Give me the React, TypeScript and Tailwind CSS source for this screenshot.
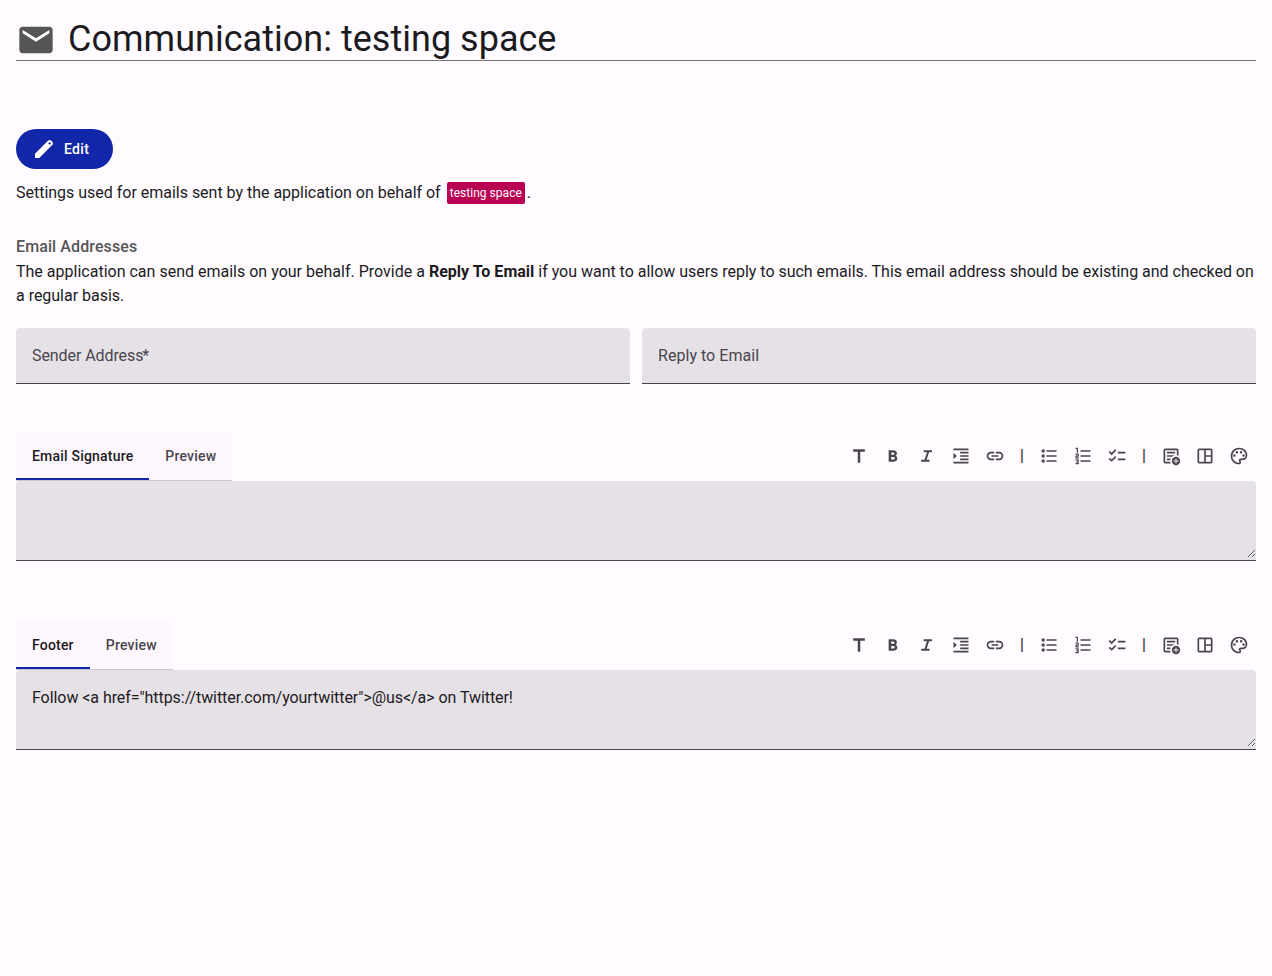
import { clsx } from 'clsx';
import { useState } from 'react';

const icons = {
    mail: 'M800-800H160c-44 0-80 36-80 80v480c0 44 36 80 80 80h640c44 0 80-36 80-80v-480c0-44-36-80-80-80Zm0 160L480-440 160-640v-80l320 200 320-200v80Z',
    edit: 'M120-120v-170l528-527q12-11 26.5-17t30.5-6q16 0 31 6t26 18l55 56q12 11 17.5 26t5.5 30q0 16-5.5 30.5T817-647L290-120H120Zm584-528 56-56-56-56-56 56 56 56Z',
    title: 'M420-160v-520H200v-120h560v120H540v520H420Z',
    bold: 'M272-200v-560h221q65 0 120 40t55 111q0 51-23 78.5T602-491q25 11 55.5 41t30.5 90q0 89-65 124.5T501-200H272Zm121-112h104q48 0 58.5-24.5T566-372q0-11-10.5-35.5T494-432H393v120Zm0-228h93q33 0 48-17t15-38q0-24-17-39t-44-15h-95v109Z',
    italic: 'M200-200v-100h160l120-360H320v-100h400v100H580L460-300h140v100H200Z',
    indent: 'M120-120v-80h720v80H120Zm320-160v-80h400v80H440Zm0-160v-80h400v80H440Zm0-160v-80h400v80H440ZM120-760v-80h720v80H120Zm0 440v-320l160 160-160 160Z',
    link: 'M440-280H280q-83 0-141.5-58.5T80-480q0-83 58.5-141.5T280-680h160v80H280q-50 0-85 35t-35 85q0 50 35 85t85 35h160v80ZM320-440v-80h320v80H320Zm200 160v-80h160q50 0 85-35t35-85q0-50-35-85t-85-35H520v-80h160q83 0 141.5 58.5T880-480q0 83-58.5 141.5T680-280H520Z',
    bullets:
        'M360-200v-80h480v80H360Zm0-240v-80h480v80H360Zm0-240v-80h480v80H360ZM200-160q-33 0-56.5-23.5T120-240q0-33 23.5-56.5T200-320q33 0 56.5 23.5T280-240q0 33-23.5 56.5T200-160Zm0-240q-33 0-56.5-23.5T120-480q0-33 23.5-56.5T200-560q33 0 56.5 23.5T280-480q0 33-23.5 56.5T200-400Zm0-240q-33 0-56.5-23.5T120-720q0-33 23.5-56.5T200-800q33 0 56.5 23.5T280-720q0 33-23.5 56.5T200-640Z',
    numbers:
        'M120-80v-60h100v-30h-60v-60h60v-30H120v-60h120q17 0 28.5 11.5T280-280v40q0 17-11.5 28.5T240-200q17 0 28.5 11.5T280-160v40q0 17-11.5 28.5T240-80H120Zm0-280v-110q0-17 11.5-28.5T160-510h60v-30H120v-60h120q17 0 28.5 11.5T280-560v70q0 17-11.5 28.5T240-450h-60v30h100v60H120Zm60-280v-180h-60v-60h120v240h-60Zm180 440v-80h480v80H360Zm0-240v-80h480v80H360Zm0-240v-80h480v80H360Z',
    checklist:
        'M222-200 80-342l56-56 85 85 170-170 56 57-225 226Zm0-320L80-662l56-56 85 85 170-170 56 57-225 226Zm298 240v-80h360v80H520Zm0-320v-80h360v80H520Z',
    addNotes:
        'M200-120q-33 0-56.5-23.5T120-200v-560q0-33 23.5-56.5T200-840h560q33 0 56.5 23.5T840-760v268q-19-9-39-15.5t-41-9.5v-243H200v560h242q3 22 9.5 42t15.5 38H200Zm80-160h163q3-21 9.5-41t14.5-39H280v80Zm0-160h244q32-30 71.5-50t84.5-27v-3H280v80Zm0-160h400v-80H280v80ZM720-40q-83 0-141.5-58.5T520-240q0-83 58.5-141.5T720-440q83 0 141.5 58.5T920-240q0 83-58.5 141.5T720-40Zm-20-80h40v-100h100v-40H740v-100h-40v100H600v40h100v100Z',
    dashboard:
        'M200-120q-33 0-56.5-23.5T120-200v-560q0-33 23.5-56.5T200-840h560q33 0 56.5 23.5T840-760v560q0 33-23.5 56.5T760-120H200Zm0-80h240v-560H200v560Zm320 0h240v-240H520v240Zm0-320h240v-240H520v240Z',
    palette:
        'M480-80q-82 0-155-31.5t-127.5-86Q143-252 111.5-325T80-480q0-83 32.5-156t88-127Q256-817 330-848.5T488-880q80 0 151 27.5t124.5 76q53.5 48.5 85 115T880-518q0 115-70 176.5T640-280h-74q-9 0-12.5 5t-3.5 11q0 12 15 34.5t15 51.5q0 50-27.5 74T480-80Zm-220-360q26 0 43-17t17-43q0-26-17-43t-43-17q-26 0-43 17t-17 43q0 26 17 43t43 17Zm120-160q26 0 43-17t17-43q0-26-17-43t-43-17q-26 0-43 17t-17 43q0 26 17 43t43 17Zm200 0q26 0 43-17t17-43q0-26-17-43t-43-17q-26 0-43 17t-17 43q0 26 17 43t43 17Zm120 160q26 0 43-17t17-43q0-26-17-43t-43-17q-26 0-43 17t-17 43q0 26 17 43t43 17ZM480-160q9 0 14.5-5t5.5-13q0-14-15-33t-15-57q0-42 29-67t71-25h70q66 0 114-38.5T800-518q0-121-92.5-201.5T488-800q-136 0-232 93t-96 227q0 133 93.5 226.5T480-160Z',
};

type IconName = keyof typeof icons;

function Icon({ name, className }: { name: IconName; className?: string }) {
    return (
        <svg viewBox="0 -960 960 960" fill="currentColor" className={clsx('shrink-0', className)}>
            <path d={icons[name]} />
        </svg>
    );
}

const toolGroups: IconName[][] = [
    ['title', 'bold', 'italic', 'indent', 'link'],
    ['bullets', 'numbers', 'checklist'],
    ['addNotes', 'dashboard', 'palette'],
];

function Toolbar() {
    return (
        <div className="flex h-12 items-center text-[#49454e]">
            {toolGroups.map((group, index) => (
                <div key={group[0]} className="flex items-center">
                    {index > 0 && <span className="w-5 text-center text-base leading-5 text-[#1d1b1e]">|</span>}
                    {group.map((name) => (
                        <button key={name} type="button" aria-label={name} className="flex h-[34px] w-[34px] items-center justify-center">
                            <Icon name={name} className="h-5 w-5" />
                        </button>
                    ))}
                </div>
            ))}
        </div>
    );
}

interface MarkdownEditorProps {
    label: string;
    value?: string;
}

function MarkdownEditor({ label, value = '' }: MarkdownEditorProps) {
    const [tab, setTab] = useState(label);

    return (
        <div>
            <div className="flex h-[49px] items-start justify-between">
                <div className="flex h-[49px] border-b border-[#c4c6d0] bg-[#fef7ff]">
                    {[label, 'Preview'].map((name) => (
                        <button
                            key={name}
                            type="button"
                            onClick={() => setTab(name)}
                            className={clsx(
                                'h-12 border-b-2 px-4 pt-0.5 text-sm font-medium tracking-[0.2px]',
                                tab === name ? 'border-[#1226aa] text-[#1d1b1e]' : 'border-transparent text-[#49454e]',
                            )}
                        >
                            {name}
                        </button>
                    ))}
                </div>
                <Toolbar />
            </div>
            <div className="h-20 overflow-hidden rounded-t border-b border-[#49454e] bg-[#e6e1e6]">
                <textarea
                    defaultValue={value}
                    className="block h-[77px] w-full resize-y px-4 pt-4 text-base leading-6 tracking-[-0.06px] text-[#1d1b1e] outline-none"
                />
            </div>
        </div>
    );
}

function TextField({ label, required }: { label: string; required?: boolean }) {
    return (
        <label className="flex h-14 flex-1 items-center rounded-t border-b border-[#49454e] bg-[#e6e1e6] px-4 text-base text-[#49454e]">
            <span className={required ? 'tracking-[-0.08px]' : 'tracking-[0.04px]'}>{label}</span>
            {required && <span className="-ml-px">*</span>}
        </label>
    );
}

export default function App() {
    return (
        <main className="min-h-screen bg-[#fffbff] px-4 pt-[19px] font-[Roboto,sans-serif] text-base text-[#1b1b1f]">
            <header className="flex h-[42px] items-center border-b border-[#77767a]">
                <Icon name="mail" className="h-10 w-10 text-[#555555]" />
                <h1 className="mb-0.5 ml-3 text-4xl leading-10 tracking-[0.02px]">Communication: testing space</h1>
            </header>

            <button type="button" className="mt-[68px] flex h-10 items-center gap-2 rounded-full bg-[#1226aa] pr-6 pl-4 text-sm font-medium tracking-[0.3px] text-white">
                <Icon name="edit" className="h-6 w-6" />
                Edit
            </button>

            <p className="mt-3 flex h-6 items-center leading-6 tracking-[-0.015px]">
                Settings used for emails sent by the application on behalf of
                <span className="mr-0.5 ml-1.5 flex h-[22px] items-center rounded-xs bg-[#ba0052] px-[3px] text-xs tracking-[0.03px] text-white">
                    testing space
                </span>
                .
            </p>

            <h2 className="mt-[30px] leading-6 font-medium tracking-[0.1px] text-[#555555]">Email Addresses</h2>
            <p className="mt-px leading-6 tracking-[-0.02px]">
                <span className="tracking-[0.005px]">The application can send emails on your behalf. Provide a </span>
                <b className="tracking-[0.02px]">Reply To Email</b> if you want to allow users reply to such emails. This email address should be existing
                and checked on a regular basis.
            </p>

            <div className="mt-5 flex gap-3">
                <TextField label="Sender Address" required />
                <TextField label="Reply to Email" />
            </div>

            <div className="mt-12 space-y-[60px]">
                <MarkdownEditor label="Email Signature" />
                <MarkdownEditor label="Footer" value={'Follow <a href="https://twitter.com/yourtwitter">@us</a> on Twitter!'} />
            </div>
        </main>
    );
}
